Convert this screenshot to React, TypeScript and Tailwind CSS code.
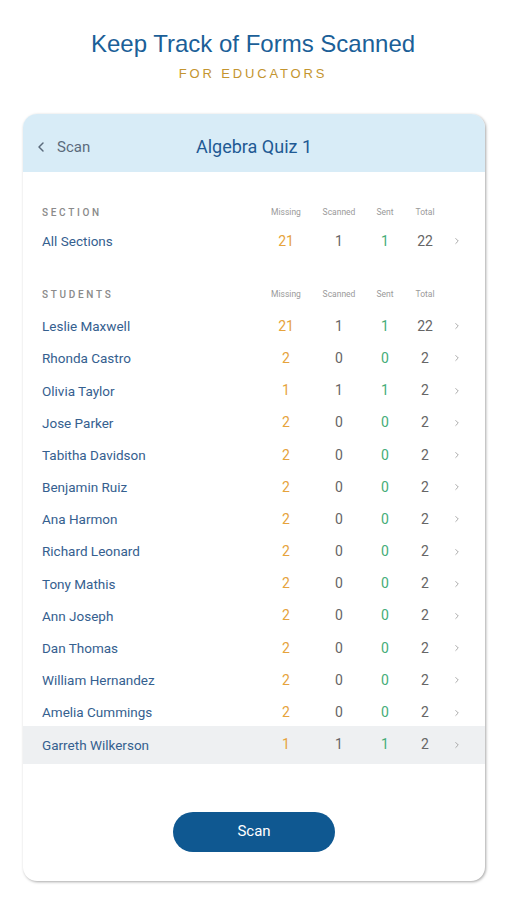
import { ChevronLeft, ChevronRight } from "lucide-react";

type Row = { name: string; missing: number; scanned: number; sent: number; total: number };

const students: Row[] = [
  { name: "Leslie Maxwell", missing: 21, scanned: 1, sent: 1, total: 22 },
  { name: "Rhonda Castro", missing: 2, scanned: 0, sent: 0, total: 2 },
  { name: "Olivia Taylor", missing: 1, scanned: 1, sent: 1, total: 2 },
  { name: "Jose Parker", missing: 2, scanned: 0, sent: 0, total: 2 },
  { name: "Tabitha Davidson", missing: 2, scanned: 0, sent: 0, total: 2 },
  { name: "Benjamin Ruiz", missing: 2, scanned: 0, sent: 0, total: 2 },
  { name: "Ana Harmon", missing: 2, scanned: 0, sent: 0, total: 2 },
  { name: "Richard Leonard", missing: 2, scanned: 0, sent: 0, total: 2 },
  { name: "Tony Mathis", missing: 2, scanned: 0, sent: 0, total: 2 },
  { name: "Ann Joseph", missing: 2, scanned: 0, sent: 0, total: 2 },
  { name: "Dan Thomas", missing: 2, scanned: 0, sent: 0, total: 2 },
  { name: "William Hernandez", missing: 2, scanned: 0, sent: 0, total: 2 },
  { name: "Amelia Cummings", missing: 2, scanned: 0, sent: 0, total: 2 },
  { name: "Garreth Wilkerson", missing: 1, scanned: 1, sent: 1, total: 2 },
];

function ColumnHeader({ label }: { label: string }) {
  return (
    <div className="flex h-[16px] items-center pl-[19px] pr-[17px]">
      <div className="flex-1 text-[10px] font-medium uppercase tracking-[0.27em] text-[#8a8a8a]">
        {label}
      </div>
      <div className="flex text-[8.5px] text-[#9a9a9a]">
        <div className="w-[52px] text-center">Missing</div>
        <div className="w-[54px] text-center">Scanned</div>
        <div className="w-[38px] text-center">Sent</div>
        <div className="w-[42px] text-center">Total</div>
        <div className="w-[22px]" />
      </div>
    </div>
  );
}

function DataRow({ row, highlight }: { row: Row; highlight?: boolean }) {
  return (
    <div
      className={
        highlight
          ? "-mt-[3px] flex h-[38px] items-center bg-[#eef0f2] pl-[19px] pr-[17px]"
          : "flex h-[32.2px] items-center pl-[19px] pr-[17px]"
      }
    >
      <div className="flex-1 text-[13.5px] text-[#35608f]">{row.name}</div>
      <div className="flex items-center text-[14px]">
        <div className="w-[52px] text-center text-[#e6a33c]">{row.missing}</div>
        <div className="w-[54px] text-center text-[#666]">{row.scanned}</div>
        <div className="w-[38px] text-center text-[#45ad78]">{row.sent}</div>
        <div className="w-[42px] text-center text-[#666]">{row.total}</div>
        <div className="flex w-[22px] items-center justify-center">
          <ChevronRight className="h-[10px] w-[10px] text-[#9a9a9a]" strokeWidth={2} />
        </div>
      </div>
    </div>
  );
}

export default function App() {
  return (
    <div className="min-h-[900px] w-[506px] bg-white font-['Roboto',sans-serif]">
      <div className="pt-[29px] text-center font-['Liberation_Sans',Arial,sans-serif]">
        <h1 className="text-[24px] leading-[30px] text-[#1b5f98]">Keep Track of Forms Scanned</h1>
        <div className="mt-[7px] text-[13px] leading-[16px] tracking-[0.22em] text-[#c4952f]">
          FOR EDUCATORS
        </div>
      </div>

      <div className="ml-[23px] mr-[21px] mt-[32px] overflow-hidden rounded-[14px] bg-white shadow-[1px_1px_3px_rgba(0,0,0,0.35)]">
        <div className="relative flex h-[58px] items-center bg-[#d8ecf7] pt-[8px]">
          <div className="flex items-center pl-[10px] text-[15px] text-[#5b6b7c]">
            <ChevronLeft className="h-[16px] w-[16px]" strokeWidth={2.2} />
            <span className="ml-[8px]">Scan</span>
          </div>
          <div className="absolute inset-x-0 top-[20px] text-center text-[18px] leading-[26px] text-[#1f5a94]">
            Algebra Quiz 1
          </div>
        </div>

        <div className="pt-[32px]">
          <ColumnHeader label="Section" />
          <div className="mt-[5px]">
            <DataRow row={{ name: "All Sections", missing: 21, scanned: 1, sent: 1, total: 22 }} />
          </div>
        </div>

        <div className="mt-[29px]">
          <ColumnHeader label="Students" />
          <div className="mt-[8px]">
            {students.map((s, i) => (
              <DataRow key={s.name} row={s} highlight={i === students.length - 1} />
            ))}
          </div>
        </div>

        <div className="flex justify-center pb-[29px] pt-[48px]">
          <button className="h-[40px] w-[162px] rounded-full bg-[#0f5891] text-[15px] text-white">
            Scan
          </button>
        </div>
      </div>
    </div>
  );
}
